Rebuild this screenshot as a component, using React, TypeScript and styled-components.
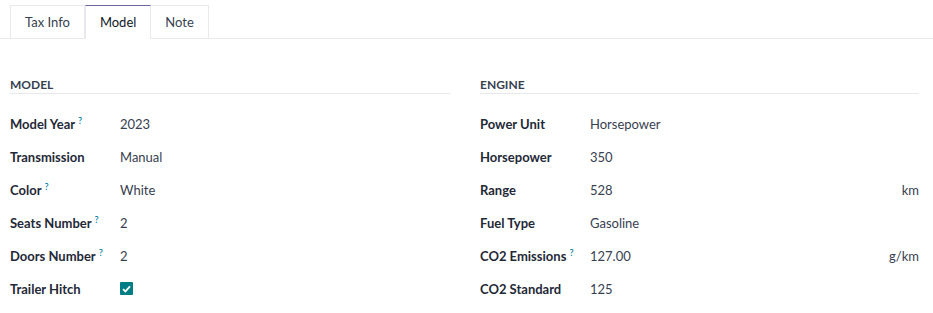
import React from "react";
import styled, { createGlobalStyle } from "styled-components";

const GlobalStyle = createGlobalStyle`
  body {
    margin: 0;
    background: #fff;
    font-family: Lato, "Noto Sans", sans-serif;
    font-size: 13px;
    color: #374151;
  }
`;

interface Field {
    label: string;
    value?: string;
    help?: boolean;
    unit?: string;
    checked?: boolean;
}

const modelFields: Field[] = [
    {label: "Model Year", value: "2023", help: true},
    {label: "Transmission", value: "Manual"},
    {label: "Color", value: "White", help: true},
    {label: "Seats Number", value: "2", help: true},
    {label: "Doors Number", value: "2", help: true},
    {label: "Trailer Hitch", checked: true},
];

const engineFields: Field[] = [
    {label: "Power Unit", value: "Horsepower"},
    {label: "Horsepower", value: "350"},
    {label: "Range", value: "528", unit: "km"},
    {label: "Fuel Type", value: "Gasoline"},
    {label: "CO2 Emissions", value: "127.00", unit: "g/km", help: true},
    {label: "CO2 Standard", value: "125"},
];

const tabs = ["Tax Info", "Model", "Note"];

const Group = ({title, fields}: { title: string; fields: Field[] }) => (
    <Column>
        <GroupTitle>{title}</GroupTitle>
        <Rows>
            {fields.map((f) => (
                <Row key={f.label}>
                    <Label>
                        {f.label}
                        {f.help && <Help>?</Help>}
                    </Label>
                    {f.checked !== undefined ? (
                        <CheckBox>
                            <svg width="9" height="8" viewBox="0 0 9 8">
                                <path d="M1 4.2 L3.4 6.4 L8 1.4" stroke="#fff" strokeWidth="1.8" fill="none"/>
                            </svg>
                        </CheckBox>
                    ) : (
                        <Value>
                            <span>{f.value}</span>
                            {f.unit && <Unit>{f.unit}</Unit>}
                        </Value>
                    )}
                </Row>
            ))}
        </Rows>
    </Column>
);

export default function App() {
    return (
        <Page>
            <GlobalStyle/>
            <TabBar>
                {tabs.map((t) => (
                    <Tab key={t} $active={t === "Model"}>{t}</Tab>
                ))}
            </TabBar>
            <Content>
                <Group title="Model" fields={modelFields}/>
                <Group title="Engine" fields={engineFields}/>
            </Content>
        </Page>
    );
}

const Page = styled.div`
  width: 933px;
`;

const TabBar = styled.div`
  display: flex;
  padding: 5px 0 0 10px;
  border-bottom: 1px solid #e7e9ed;
`;

const Tab = styled.div<{ $active?: boolean }>`
  height: 32px;
  display: flex;
  align-items: center;
  padding: 0 14px;
  margin-bottom: -1px;
  border: 1px solid #e7e9ed;
  border-left-width: ${(p) => (p.$active ? "1px" : "0")};
  border-top-color: ${(p) => (p.$active ? "#71639e" : "#e7e9ed")};
  border-bottom-color: ${(p) => (p.$active ? "#fff" : "#e7e9ed")};
  background: #fff;
  color: ${(p) => (p.$active ? "#111827" : "#374151")};

  &:first-child {
    border-left-width: 1px;
  }
`;

const Content = styled.div`
  display: grid;
  grid-template-columns: 440px 439px;
  column-gap: 30px;
  padding: 38px 0 0 10px;
`;

const Column = styled.div`
  display: flex;
  flex-direction: column;
`;

const GroupTitle = styled.div`
  font-size: 12px;
  font-weight: 700;
  text-transform: uppercase;
  color: #374151;
  border-bottom: 1px solid #e7e9ed;
  line-height: 16px;
`;

const Rows = styled.div`
  display: flex;
  flex-direction: column;
  padding-top: 13px;
`;

const Row = styled.div`
  display: flex;
  align-items: center;
  height: 33px;
`;

const Label = styled.div`
  width: 110px;
  flex-shrink: 0;
  font-weight: 700;
  color: #1f2937;
  white-space: nowrap;
`;

const Help = styled.sup`
  color: #0180a5;
  font-size: 9px;
  margin-left: 3px;
  font-weight: 600;
`;

const Value = styled.div`
  flex: 1;
  display: flex;
  justify-content: space-between;
  color: #374151;
`;

const Unit = styled.span`
  color: #374151;
`;

const CheckBox = styled.div`
  width: 13px;
  height: 13px;
  background: #017e84;
  border-radius: 1px;
  display: flex;
  align-items: center;
  justify-content: center;
`;
